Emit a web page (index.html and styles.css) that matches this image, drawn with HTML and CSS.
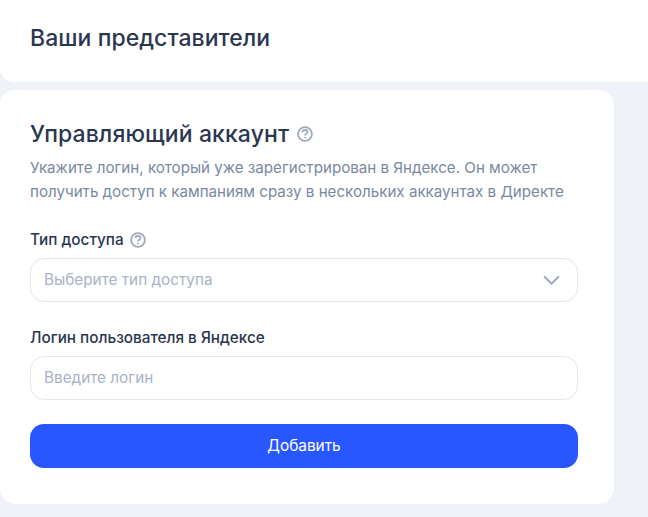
FILE: index.html
```html
<!DOCTYPE html>
<html lang="ru">
<head>
<meta charset="utf-8">
<title>Ваши представители</title>
<link rel="stylesheet" href="styles.css">
</head>
<body>
<header class="top">
  <h1 class="page-title">Ваши представители</h1>
</header>
<main class="card">
  <div class="heading">
    <h2 class="card-title">Управляющий аккаунт</h2>
    <svg class="help" viewBox="0 0 16 16" aria-hidden="true"><circle cx="8" cy="8" r="6.9"/><path d="M5.5 6.3c0-1.4 1.2-2.3 2.5-2.3s2.5.9 2.5 2.1c0 1.8-2.5 1.7-2.5 3.5"/><path d="M8 11v1.3"/></svg>
  </div>
  <p class="desc">Укажите логин, который уже зарегистрирован в Яндексе. Он может<br>получить доступ к кампаниям сразу в нескольких аккаунтах в Директе</p>
  <div class="field">
    <div class="label-row">
      <span class="label">Тип доступа</span>
      <svg class="help" viewBox="0 0 16 16" aria-hidden="true"><circle cx="8" cy="8" r="6.9"/><path d="M5.5 6.3c0-1.4 1.2-2.3 2.5-2.3s2.5.9 2.5 2.1c0 1.8-2.5 1.7-2.5 3.5"/><path d="M8 11v1.3"/></svg>
    </div>
    <div class="control">
      <span class="placeholder">Выберите тип доступа</span>
      <svg class="chevron" viewBox="0 0 16 9" aria-hidden="true"><path d="M1 1l7 7 7-7"/></svg>
    </div>
  </div>
  <div class="field">
    <div class="label-row"><span class="label">Логин пользователя в Яндексе</span></div>
    <div class="control"><span class="placeholder">Введите логин</span></div>
  </div>
  <button class="submit" type="button">Добавить</button>
</main>
</body>
</html>
```
FILE: styles.css
```css
* { box-sizing: border-box; }
html, body { margin: 0; padding: 0; }
body {
  width: 648px;
  height: 517px;
  overflow: hidden;
  background: #eff2f7;
  font-family: Inter, "Noto Sans", Roboto, sans-serif;
  color: #2b3650;
}
.top {
  height: 82px;
  background: #fff;
  border-bottom-left-radius: 14px;
  padding: 23px 30px 0;
}
.page-title {
  margin: 0;
  font-size: 23px;
  line-height: 30px;
  font-weight: 500;
  letter-spacing: 0.06px;
}
.card {
  width: 614px;
  height: 414px;
  margin-top: 8px;
  background: #fff;
  border-radius: 14px 16px 16px 16px;
  padding: 29px 36px 0 30px;
}
.heading {
  display: flex;
  align-items: center;
  gap: 8px;
  height: 30px;
}
.card-title {
  margin: 0;
  font-size: 23px;
  line-height: 30px;
  font-weight: 500;
  letter-spacing: 0.1px;
}
.help {
  width: 16px;
  height: 16px;
  fill: none;
  stroke: #a1a9bd;
  stroke-width: 1.8;
}
.desc {
  margin: 7px 0 0;
  font-size: 15.15px;
  line-height: 24px;
  color: #7a88a3;
  white-space: nowrap;
}
.field { margin-top: 26px; }
.label-row {
  display: flex;
  align-items: center;
  gap: 6px;
  height: 20px;
}
.label {
  font-size: 15.3px;
  line-height: 20px;
  font-weight: 500;
}
.control {
  display: flex;
  align-items: center;
  justify-content: space-between;
  height: 44px;
  margin-top: 8px;
  padding: 0 17px 2px 13px;
  border: 1px solid #e4e6f0;
  border-radius: 14px;
}
.placeholder {
  font-size: 15.3px;
  color: #a9b2c6;
}
.chevron {
  width: 17px;
  height: 10px;
  margin-top: 2px;
  fill: none;
  stroke: #a1a9bd;
  stroke-width: 1.8;
}
.submit {
  display: block;
  width: 548px;
  height: 44px;
  margin-top: 24px;
  padding: 0 0 2px;
  border: 0;
  border-radius: 14px;
  background: #2857ff;
  color: #fff;
  font: 400 15.4px Inter, "Noto Sans", Roboto, sans-serif;
}
```
